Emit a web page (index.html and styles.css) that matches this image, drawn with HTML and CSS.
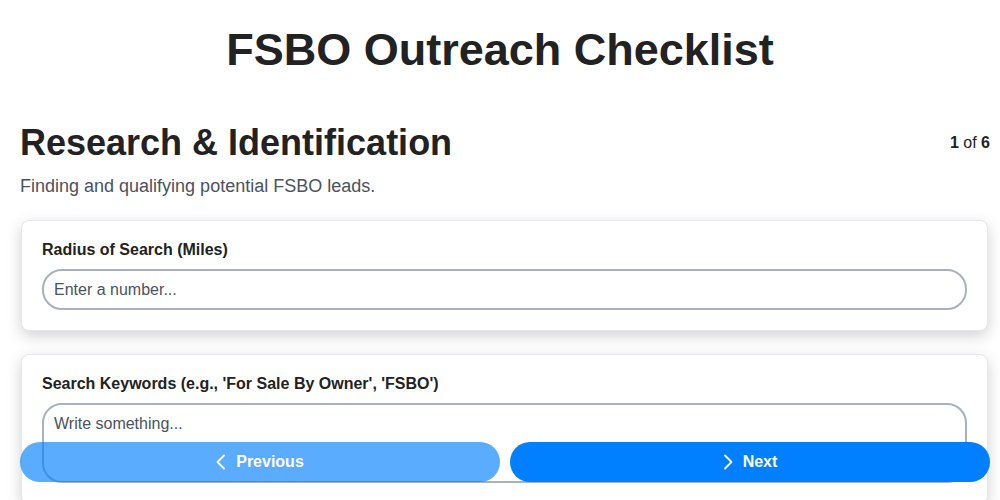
FILE: index.html
```html
<!DOCTYPE html>
<html lang="en">
<head>
<meta charset="utf-8">
<title>FSBO Outreach Checklist</title>
<link rel="stylesheet" href="styles.css">
</head>
<body>
<div class="page">
  <h1 class="title">FSBO Outreach Checklist</h1>
  <div class="section-head">
    <h2 class="section-title">Research &amp; Identification</h2>
    <div class="step"><b>1</b> of <b>6</b></div>
  </div>
  <p class="subtitle">Finding and qualifying potential FSBO leads.</p>

  <div class="card">
    <label class="label">Radius of Search (Miles)</label>
    <input class="input" type="text" placeholder="Enter a number...">
  </div>

  <div class="card">
    <label class="label">Search Keywords (e.g., 'For Sale By Owner', 'FSBO')</label>
    <textarea class="textarea" placeholder="Write something..."></textarea>
  </div>
</div>

<div class="nav">
  <button class="btn btn-prev">
    <svg class="chev" viewBox="0 0 10 16" width="10" height="16"><path d="M8 1.5 L1.5 8 L8 14.5"/></svg>
    <span>Previous</span>
  </button>
  <button class="btn btn-next">
    <svg class="chev" viewBox="0 0 10 16" width="10" height="16"><path d="M2 1.5 L8.5 8 L2 14.5"/></svg>
    <span>Next</span>
  </button>
</div>
</body>
</html>
```

FILE: styles.css
```css
* { box-sizing: border-box; }
html, body { margin: 0; padding: 0; background: #fff; }
body {
  font-family: "Liberation Sans", Arial, sans-serif;
  color: #222;
}
.page {
  padding: 0 10px 0 20px;
}
.title {
  margin: 0 0 0 -10px;
  padding-top: 24px;
  font-size: 45px;
  font-weight: 700;
  text-align: center;
  color: #222;
  line-height: 52px;
}
.section-head {
  display: flex;
  justify-content: space-between;
  align-items: center;
  margin-top: 46px;
}
.section-title {
  margin: 0;
  font-size: 36px;
  font-weight: 700;
  line-height: 42px;
  color: #222;
}
.step {
  font-size: 16px;
  color: #222;
}
.step b { font-weight: 700; }
.subtitle {
  margin: 11px 0 0;
  font-size: 18px;
  line-height: 22px;
  color: #4a5260;
}
.card {
  margin: 23px 2px 0 1px;
  background: #fff;
  border: 1px solid #e6e7ec;
  border-radius: 8px;
  box-shadow: 0 5px 15px rgba(0, 0, 0, 0.18);
  padding: 20px;
  display: flex;
  flex-direction: column;
}
.card + .card { margin-top: 23px; }
.label {
  font-size: 16px;
  font-weight: 700;
  line-height: 18px;
  color: #222;
  margin-bottom: 10px;
}
.input, .textarea {
  font-family: "Liberation Sans", Arial, sans-serif;
  font-size: 16px;
  color: #222;
  border: 2px solid #a9b1ba;
  border-radius: 20px;
  padding: 10px 10px;
  background: #fff;
  outline: none;
  width: 100%;
}
.input { height: 41px; }
.textarea { height: 80px; resize: none; display: block; }
.input::placeholder, .textarea::placeholder { color: #4a5260; opacity: 1; }
.nav {
  position: fixed;
  left: 20px;
  right: 10px;
  bottom: 18px;
  display: flex;
  gap: 10px;
}
.btn {
  flex: 1;
  height: 40px;
  border: none;
  border-radius: 20px;
  color: #fff;
  font-family: "Liberation Sans", Arial, sans-serif;
  font-size: 16px;
  font-weight: 700;
  display: flex;
  align-items: center;
  justify-content: center;
  gap: 10px;
  background: #0080ff;
}
.btn-prev { opacity: 0.65; }
.chev {
  fill: none;
  stroke: #fff;
  stroke-width: 1.8;
  stroke-linecap: round;
  stroke-linejoin: round;
}
```
